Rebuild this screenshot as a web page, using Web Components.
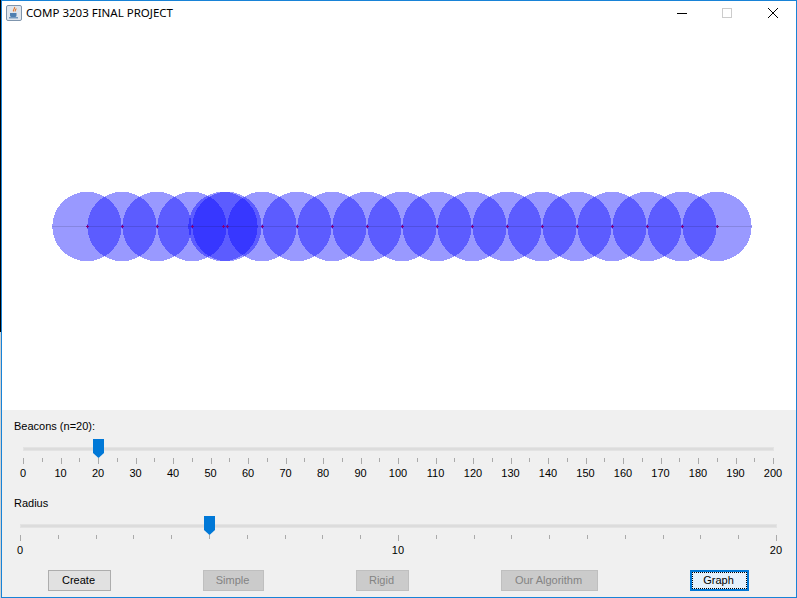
<!DOCTYPE html>
<html>
<head>
<meta charset="utf-8">
<title>COMP 3203 FINAL PROJECT</title>
<style>
    html, body { margin: 0; padding: 0; }
    body {
        font-family: "Liberation Sans", sans-serif;
        background: #fff linear-gradient(#000 0 332px, #d0d0d0 332px) no-repeat 0 0 / 1px 598px;
    }
</style>
</head>
<body>
<app-window heading="COMP 3203 FINAL PROJECT">
    <beacon-canvas></beacon-canvas>
    <control-panel>
        <tick-slider label="Beacons (n=20):" max="200" value="20" minor="5" major="10" inset="21" right="22"></tick-slider>
        <tick-slider label="Radius" max="20" value="5" minor="1" major="10" inset="18" right="19"></tick-slider>
        <button-row slot="buttons">
            <flat-button style="width: 63px">Create</flat-button>
            <flat-button style="width: 61px" disabled>Simple</flat-button>
            <flat-button style="width: 53px" disabled>Rigid</flat-button>
            <flat-button style="width: 97px" disabled>Our Algorithm</flat-button>
            <flat-button style="width: 59px" focused>Graph</flat-button>
        </button-row>
    </control-panel>
</app-window>

<script>
class AppWindow extends HTMLElement {
    constructor() {
        super();
        const shadow = this.attachShadow({ mode: 'open' });
        shadow.innerHTML = `
            <style>
                :host {
                    display: flex;
                    flex-direction: column;
                    box-sizing: border-box;
                    width: 796px;
                    height: 598px;
                    margin-left: 1px;
                    border: 1px solid #1883d7;
                    background: #fff;
                    overflow: hidden;
                }
                .bar {
                    display: flex;
                    align-items: center;
                    box-sizing: border-box;
                    height: 29px;
                    padding-bottom: 5px;
                    flex: none;
                    font-family: "Noto Sans", sans-serif;
                    font-size: 11.500px;
                    color: #000;
                }
                .icon { width: 16px; height: 16px; margin: 0 4px; flex: none; }
                .title { flex: 1; white-space: nowrap; margin-bottom: 2px; }
                .btns { display: flex; }
                .btn { width: 46px; display: flex; align-items: center; justify-content: center; }
                .btn:first-child { width: 44px; }
            </style>
            <div class="bar">
                <svg class="icon" viewBox="0 0 16 16">
                    <rect x="0.5" y="0.5" width="15" height="15" rx="1.5" fill="#dfe5ec" stroke="#7f95ad"/>
                    <path d="M8.5 2c1 1.500-2 2.500-1 4.500M10 3.500c.5 1-1.500 1.500-.7 3" fill="none" stroke="#e2762a" stroke-width="1.100"/>
                    <path d="M4 8h6.500v2.500c0 1-1 1.500-2 1.500H6c-1 0-2-.5-2-1.500z" fill="#4f7fb0"/>
                    <path d="M3 12.800h9" stroke="#4f7fb0" stroke-width="1.100"/>
                </svg>
                <div class="title"></div>
                <div class="btns">
                    <div class="btn"><svg width="10" height="10"><path d="M0 5.500h10" stroke="#000"/></svg></div>
                    <div class="btn"><svg width="10" height="10"><rect x=".5" y=".5" width="9" height="9" fill="none" stroke="#ccc"/></svg></div>
                    <div class="btn"><svg width="10" height="10"><path d="M0 0L10 10M10 0L0 10" stroke="#000"/></svg></div>
                </div>
            </div>
            <slot></slot>
        `;
        shadow.querySelector('.title').textContent = this.getAttribute('heading') || '';
    }
}

class BeaconCanvas extends HTMLElement {
    constructor() {
        super();
        const shadow = this.attachShadow({ mode: 'open' });
        // one beacon was dropped off the regular spacing, at x=223
        const xs = [223];
        for (let i = 0; i < 19; i++) xs.push(87 + 35 * i);

        let body = '';
        xs.forEach(x => {
            body += `<circle cx="${x - 2}" cy="196.500" r="34.700" fill="#00f" fill-opacity="0.4"/>`;
        });
        body += `<rect x="50" y="196" width="700" height="1" fill="#000" fill-opacity="0.12"/>`;
        xs.forEach(x => {
            body += `<path d="M${x - 3.500} 196.500h3M${x - 2} 195v3" stroke="#80007f" stroke-width="1"/>`;
        });

        shadow.innerHTML = `
            <style>
                :host { display: block; height: 380px; flex: none; background: #fff; }
                svg { display: block; width: 100%; height: 100%; }
            </style>
            <svg shape-rendering="crispEdges">${body}</svg>
        `;
    }
}

class ControlPanel extends HTMLElement {
    constructor() {
        super();
        const shadow = this.attachShadow({ mode: 'open' });
        shadow.innerHTML = `
            <style>
                :host {
                    display: flex;
                    flex-direction: column;
                    flex: 1;
                    background: #f0f0f0;
                    font-family: "Liberation Sans", sans-serif;
                    font-size: 11px;
                    color: #000;
                }
            </style>
            <slot></slot>
            <slot name="buttons"></slot>
        `;
    }
}

class TickSlider extends HTMLElement {
    constructor() {
        super();
        const shadow = this.attachShadow({ mode: 'open' });
        const max = Number(this.getAttribute('max'));
        const value = Number(this.getAttribute('value'));
        const minor = Number(this.getAttribute('minor'));
        const major = Number(this.getAttribute('major'));
        const inset = this.getAttribute('inset');
        const right = this.getAttribute('right');

        let ticks = '';
        for (let v = 0; v <= max; v += minor) {
            const isMajor = v % major === 0;
            ticks += `<div class="tick ${isMajor ? 'major' : ''}"><i></i>${isMajor ? `<span>${v}</span>` : ''}</div>`;
        }

        shadow.innerHTML = `
            <style>
                :host { display: block; height: 77px; flex: none; }
                .label { height: 14px; line-height: 14px; padding: 9px 0 0 12px; white-space: nowrap; }
                .body { padding: 0 ${right}px 0 ${inset}px; }
                .track {
                    position: relative;
                    height: 4px;
                    margin-top: 14px;
                    background: #dcdcdc;
                    border: 1px solid #e3e3e3;
                    box-sizing: border-box;
                }
                .thumb {
                    position: absolute;
                    left: calc(${value / max * 100}% - 5.500px);
                    top: -9px;
                    width: 11px;
                    height: 19px;
                    fill: #0078d7;
                }
                .ticks { display: flex; justify-content: space-between; margin-top: 7px; }
                .tick { width: 1px; display: flex; flex-direction: column; align-items: center; }
                .tick i { display: block; flex: none; width: 1px; height: 4px; background: #aaa; }
                .tick.major i { height: 6px; }
                .tick span { flex: none; margin: 2px 1px 0 0; line-height: 14px; white-space: nowrap; }
            </style>
            <div class="label"></div>
            <div class="body">
                <div class="track">
                    <svg class="thumb" viewBox="0 0 11 19"><path d="M0 0h11v14l-5.500 5L0 14z"/></svg>
                </div>
                <div class="ticks">${ticks}</div>
            </div>
        `;
        shadow.querySelector('.label').textContent = this.getAttribute('label');
    }
}

class ButtonRow extends HTMLElement {
    constructor() {
        super();
        const shadow = this.attachShadow({ mode: 'open' });
        shadow.innerHTML = `
            <style>
                :host { display: flex; justify-content: space-around; padding: 6px 1px 0 0; }
            </style>
            <slot></slot>
        `;
    }
}

class FlatButton extends HTMLElement {
    constructor() {
        super();
        const shadow = this.attachShadow({ mode: 'open' });
        shadow.innerHTML = `
            <style>
                :host {
                    display: block;
                    box-sizing: border-box;
                    height: 21px;
                    line-height: 19px;
                    padding-right: 2px;
                    text-align: center;
                    border: 1px solid #adadad;
                    background: #e1e1e1;
                    color: #000;
                    white-space: nowrap;
                    position: relative;
                }
                :host([disabled]) { background: #cbcbcb; border-color: #bfbfbf; color: #838383; }
                :host([focused]) { background: #e5f1fb; border: 2px solid #0078d7; line-height: 17px; }
                :host([focused]) .dots {
                    position: absolute;
                    inset: 0;
                    border: 1px dotted #000;
                }
            </style>
            <div class="dots"></div>
            <slot></slot>
        `;
    }
}

customElements.define('app-window', AppWindow);
customElements.define('beacon-canvas', BeaconCanvas);
customElements.define('control-panel', ControlPanel);
customElements.define('tick-slider', TickSlider);
customElements.define('button-row', ButtonRow);
customElements.define('flat-button', FlatButton);
</script>
</body>
</html>
